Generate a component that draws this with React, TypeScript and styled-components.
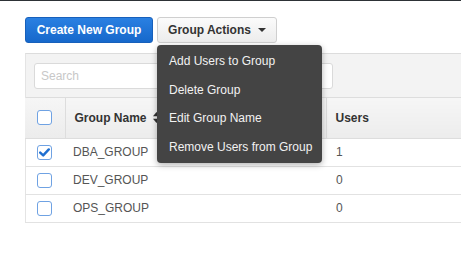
import styled, { createGlobalStyle } from 'styled-components';

const GlobalStyle = createGlobalStyle`
  html, body {
    margin: 0;
    padding: 0;
    background: #ffffff;
    font-family: "Liberation Sans", Arial, sans-serif;
    overflow: hidden;
  }
`;

type Group = { name: string; users: number; checked: boolean };

const groups: Group[] = [
  { name: 'DBA_GROUP', users: 1, checked: true },
  { name: 'DEV_GROUP', users: 0, checked: false },
  { name: 'OPS_GROUP', users: 0, checked: false },
];

const menuItems = [
  'Add Users to Group',
  'Delete Group',
  'Edit Group Name',
  'Remove Users from Group',
];

const SortIcon = () => (
  <svg width="7" height="11" viewBox="0 0 7 11">
    <path d="M3.5 0 L7 4.2 L0 4.2 Z" fill="#333" />
    <path d="M3.5 11 L7 6.8 L0 6.8 Z" fill="#333" />
  </svg>
);

const CheckIcon = () => (
  <svg width="11" height="9" viewBox="0 0 11 9">
    <path
      d="M1.2 4.6 L4.2 7.4 L9.8 1.4"
      fill="none"
      stroke="#1f6fd0"
      strokeWidth="2.4"
      strokeLinecap="round"
      strokeLinejoin="round"
    />
  </svg>
);

const App = () => {
  return (
    <Page>
      <GlobalStyle />
      <TopBar />
      <Content>
        <Actions>
          <PrimaryButton>Create New Group</PrimaryButton>
          <DropdownWrap>
            <SecondaryButton>
              Group Actions <Caret />
            </SecondaryButton>
            <Menu>
              {menuItems.map((item) => (
                <MenuItem key={item}>{item}</MenuItem>
              ))}
            </Menu>
          </DropdownWrap>
        </Actions>
        <Panel>
          <Toolbar>
            <SearchInput placeholder="Search" />
          </Toolbar>
          <Table>
            <thead>
              <tr>
                <HeadCell width={40}>
                  <Checkbox checked={false} />
                </HeadCell>
                <HeadCell width={261}>
                  <HeadLabel>
                    Group Name <SortIcon />
                  </HeadLabel>
                </HeadCell>
                <HeadCell>Users</HeadCell>
              </tr>
            </thead>
            <tbody>
              {groups.map((g) => (
                <tr key={g.name}>
                  <Cell>
                    <Checkbox checked={g.checked}>
                      {g.checked && <CheckIcon />}
                    </Checkbox>
                  </Cell>
                  <Cell>{g.name}</Cell>
                  <Cell>{g.users}</Cell>
                </tr>
              ))}
            </tbody>
          </Table>
        </Panel>
      </Content>
    </Page>
  );
};

export default App;

const Page = styled.div`
  width: 461px;
  height: 262px;
  overflow: hidden;
`;

const TopBar = styled.div`
  height: 1px;
  background: #2d3236;
`;

const Content = styled.div`
  padding: 16px 0 0 25px;
`;

const Actions = styled.div`
  display: flex;
  gap: 4px;
  height: 26px;
`;

const PrimaryButton = styled.button`
  height: 26px;
  width: 128px;
  padding: 0;
  border: 1px solid #1760bb;
  border-radius: 3px;
  background: linear-gradient(#2a80e2, #1668cb);
  color: #ffffff;
  font-family: "Liberation Sans", Arial, sans-serif;
  font-size: 12px;
  font-weight: 700;
`;

const DropdownWrap = styled.div`
  position: relative;
`;

const SecondaryButton = styled.button`
  height: 26px;
  width: 120px;
  padding: 0;
  border: 1px solid #cfcfcf;
  border-radius: 3px;
  background: linear-gradient(#fbfbfb, #ececec);
  color: #333333;
  font-family: "Liberation Sans", Arial, sans-serif;
  font-size: 12px;
  font-weight: 700;
  display: flex;
  align-items: center;
  justify-content: center;
  gap: 2px;
`;

const Caret = styled.span`
  display: inline-block;
  margin-left: 5px;
  width: 0;
  height: 0;
  border-left: 4px solid transparent;
  border-right: 4px solid transparent;
  border-top: 4px solid #333;
`;

const Menu = styled.ul`
  position: absolute;
  top: 28px;
  left: 0;
  z-index: 2;
  width: 165px;
  margin: 0;
  padding: 2px 0 2px;
  list-style: none;
  background: #444444;
  border-radius: 4px;
  box-shadow: 0 2px 6px rgba(0, 0, 0, 0.3);
`;

const MenuItem = styled.li`
  height: 28.5px;
  line-height: 28px;
  padding-left: 12px;
  color: #f2f2f2;
  font-size: 12px;
  white-space: nowrap;
`;

const Panel = styled.div`
  margin-top: 10px;
  width: 460px;
  border-top: 1px solid #dcdcdc;
  border-left: 1px solid #e4e4e4;
`;

const Toolbar = styled.div`
  height: 44px;
  padding: 9px 0 0 8px;
  box-sizing: border-box;
  background: #f3f3f3;
  border-bottom: 1px solid #dddddd;
`;

const SearchInput = styled.input`
  box-sizing: border-box;
  width: 299px;
  height: 26px;
  padding: 0 6px;
  border: 1px solid #dadada;
  border-radius: 3px;
  background: #ffffff;
  font-family: "Liberation Sans", Arial, sans-serif;
  font-size: 12px;
  outline: none;
  &::placeholder {
    color: #c8c8c8;
  }
`;

const Table = styled.table`
  width: 100%;
  border-collapse: collapse;
  margin-left: -1px;
`;

const HeadCell = styled.th<{ width?: number }>`
  height: 40px;
  padding: 0 0 0 ${({ width }) => (width === 40 ? '12px' : '9px')};
  width: ${({ width }) => (width ? `${width}px` : 'auto')};
  box-sizing: border-box;
  text-align: left;
  font-size: 12px;
  font-weight: 700;
  color: #333333;
  background: linear-gradient(#f6f6f6, #ececec);
  border-right: 1px solid #dddddd;
  border-bottom: 1px solid #dddddd;
`;

const HeadLabel = styled.span`
  display: inline-flex;
  align-items: center;
  gap: 6px;
`;

const Cell = styled.td`
  height: 27px;
  padding: 0 0 0 8px;
  font-size: 12px;
  color: #555555;
  border-bottom: 1px solid #e2e2e2;
  &:first-child {
    padding-left: 12px;
  }
  &:last-child {
    padding-left: 10px;
  }
`;

const Checkbox = styled.span<{ checked: boolean }>`
  display: flex;
  align-items: center;
  justify-content: center;
  box-sizing: border-box;
  width: 15px;
  height: 15px;
  border: 1.5px solid #6fa2e3;
  border-radius: 3px;
  background: #ffffff;
`;
